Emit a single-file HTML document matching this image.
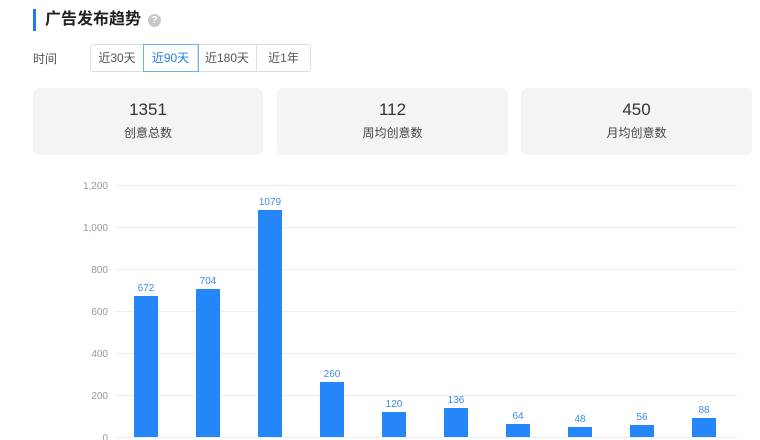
<!DOCTYPE html>
<html><head><meta charset="utf-8"><style>
*{margin:0;padding:0;box-sizing:border-box}
body{width:760px;height:440px;background:#fff;font-family:"Liberation Sans","Noto Sans CJK SC",sans-serif;position:relative;overflow:hidden;color:#333}
.bar{position:absolute;left:33px;top:9px;width:3px;height:22px;background:#1f7de8}
.title{position:absolute;left:45px;top:8px;font-size:16px;font-weight:bold;color:#222;line-height:24px}
.q{position:absolute;left:148px;top:14px;width:13px;height:13px;border-radius:50%;background:#c8c8c8;color:#fff;font-size:10px;line-height:13px;text-align:center;font-weight:bold}
.lbl{position:absolute;left:33px;top:50px;font-size:12px;color:#555}
.btns{position:absolute;left:90px;top:44px;height:28px;display:flex;border:1px solid #dcdfe6;border-radius:3px}
.btns div{font-size:12px;color:#555;line-height:26px;text-align:center;border-right:1px solid #dcdfe6}
.btns div:last-child{border-right:none}
.btns .on{color:#1f7de8;outline:1px solid #6fb0f0;position:relative}
.card{position:absolute;top:88px;height:67px;background:#f3f4f6;border-radius:6px;text-align:center}
.card .n{font-size:17px;color:#333;margin-top:11px;line-height:21px}
.card .t{font-size:12px;color:#444;margin-top:4px;line-height:18px}
svg{position:absolute;left:0;top:0}
</style></head><body>
<div class="bar"></div>
<div class="title">广告发布趋势</div>
<div class="q">?</div>
<div class="lbl">时间</div>
<div class="btns"><div style="width:53px">近30天</div><div class="on" style="width:54px">近90天</div><div style="width:59px">近180天</div><div style="width:53px">近1年</div></div>
<div class="card" style="left:33px;width:230px"><div class="n">1351</div><div class="t">创意总数</div></div>
<div class="card" style="left:277px;width:231px"><div class="n">112</div><div class="t">周均创意数</div></div>
<div class="card" style="left:521px;width:231px"><div class="n">450</div><div class="t">月均创意数</div></div>
<svg width="760" height="440" font-family="Liberation Sans, sans-serif" font-size="10">
<g stroke="#eeeeee" stroke-width="1">
<line x1="115" x2="737" y1="185.5" y2="185.5"/><line x1="115" x2="737" y1="227.5" y2="227.5"/><line x1="115" x2="737" y1="269.5" y2="269.5"/><line x1="115" x2="737" y1="311.5" y2="311.5"/><line x1="115" x2="737" y1="353.5" y2="353.5"/><line x1="115" x2="737" y1="395.5" y2="395.5"/><line x1="115" x2="737" y1="437.5" y2="437.5"/>
</g>
<g fill="#999" text-anchor="end">
<text x="108" y="189">1,200</text><text x="108" y="231">1,000</text><text x="108" y="273">800</text><text x="108" y="315">600</text><text x="108" y="357">400</text><text x="108" y="399">200</text><text x="108" y="441">0</text>
</g>
<g fill="#2486f9">
<rect x="134" y="296" width="24" height="141"/><rect x="196" y="289" width="24" height="148"/><rect x="258" y="210" width="24" height="227"/><rect x="320" y="382" width="24" height="55"/><rect x="382" y="412" width="24" height="25"/><rect x="444" y="408" width="24" height="29"/><rect x="506" y="424" width="24" height="13"/><rect x="568" y="427" width="24" height="10"/><rect x="630" y="425" width="24" height="12"/><rect x="692" y="418" width="24" height="19"/>
</g>
<g fill="#3a8ee6" text-anchor="middle">
<text x="146" y="291">672</text><text x="208" y="284">704</text><text x="270" y="205">1079</text><text x="332" y="377">260</text><text x="394" y="407">120</text><text x="456" y="403">136</text><text x="518" y="419">64</text><text x="580" y="422">48</text><text x="642" y="420">56</text><text x="704" y="413">88</text>
</g>
</svg>
</body></html>
